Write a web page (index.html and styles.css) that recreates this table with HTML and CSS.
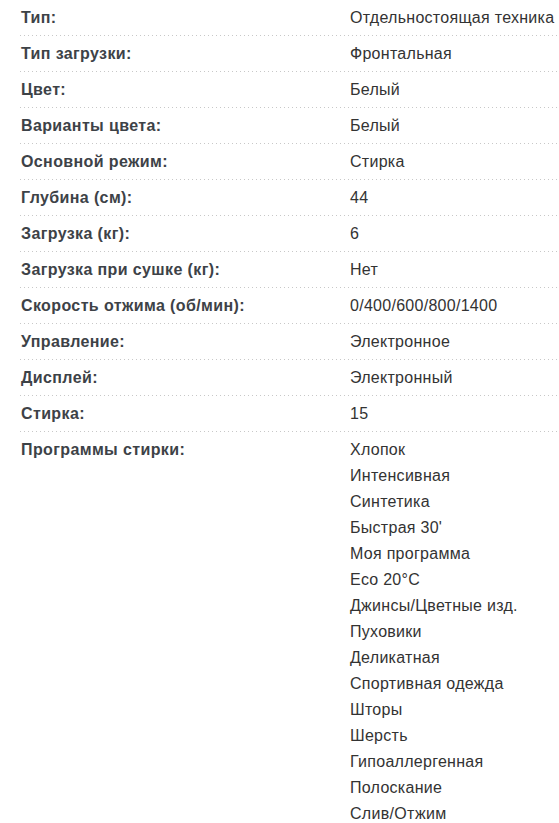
FILE: index.html
```html
<!DOCTYPE html>
<html lang="ru">
<head>
<meta charset="utf-8">
<link rel="stylesheet" href="styles.css">
</head>
<body>
<div class="specs">
  <div class="row"><div class="label">Тип:</div><div class="value">Отдельностоящая техника</div></div>
  <div class="row"><div class="label">Тип загрузки:</div><div class="value">Фронтальная</div></div>
  <div class="row"><div class="label">Цвет:</div><div class="value">Белый</div></div>
  <div class="row"><div class="label">Варианты цвета:</div><div class="value">Белый</div></div>
  <div class="row"><div class="label">Основной режим:</div><div class="value">Стирка</div></div>
  <div class="row"><div class="label">Глубина (см):</div><div class="value">44</div></div>
  <div class="row"><div class="label">Загрузка (кг):</div><div class="value">6</div></div>
  <div class="row"><div class="label">Загрузка при сушке (кг):</div><div class="value">Нет</div></div>
  <div class="row"><div class="label">Скорость отжима (об/мин):</div><div class="value">0/400/600/800/1400</div></div>
  <div class="row"><div class="label">Управление:</div><div class="value">Электронное</div></div>
  <div class="row"><div class="label">Дисплей:</div><div class="value">Электронный</div></div>
  <div class="row"><div class="label">Стирка:</div><div class="value">15</div></div>
  <div class="row last"><div class="label">Программы стирки:</div><div class="value">
    <div>Хлопок</div>
    <div>Интенсивная</div>
    <div>Синтетика</div>
    <div>Быстрая 30'</div>
    <div>Моя программа</div>
    <div>Eco 20°C</div>
    <div>Джинсы/Цветные изд.</div>
    <div>Пуховики</div>
    <div>Деликатная</div>
    <div>Спортивная одежда</div>
    <div>Шторы</div>
    <div>Шерсть</div>
    <div>Гипоаллергенная</div>
    <div>Полоскание</div>
    <div>Слив/Отжим</div>
  </div></div>
</div>
</body>
</html>
```

FILE: styles.css
```css
html, body {
  margin: 0;
  padding: 0;
  background: #fff;
  overflow: hidden;
}
.specs {
  padding-left: 20px;
  font-family: "Liberation Sans", Arial, sans-serif;
  font-size: 16px;
  line-height: 26px;
}
.row {
  display: grid;
  grid-template-columns: 330px 1fr;
  padding: 5px 0 5px;
  background-image: linear-gradient(to right, #c8c8c8 1px, transparent 1px);
  background-size: 4px 1px;
  background-repeat: repeat-x;
  background-position: 0 100%;
}
.row.last {
  background: none;
}
.label {
  font-weight: bold;
  color: #3d4247;
  padding-left: 1px;
  letter-spacing: 0.38px;
}
.value {
  color: #333;
  white-space: nowrap;
  letter-spacing: 0.28px;
}
```
